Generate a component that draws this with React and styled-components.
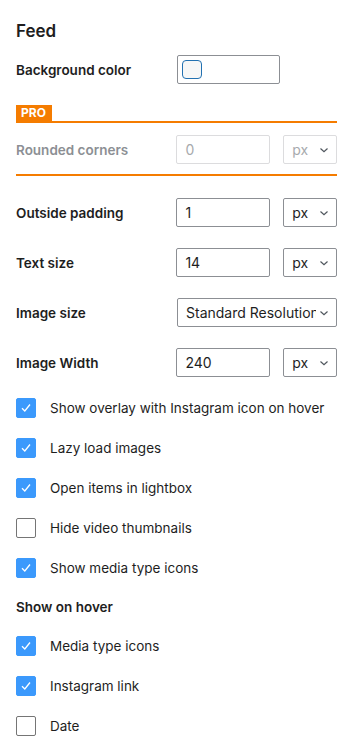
import React from 'react';
import styled, { createGlobalStyle } from 'styled-components';

const GlobalStyle = createGlobalStyle`
  body {
    margin: 0;
    background: #ffffff;
    font-family: Inter, "Noto Sans", sans-serif;
    color: #1e1e1e;
  }
`;

const Panel = styled.div`
  width: 349px;
  padding: 20px 12px 0 16px;
  box-sizing: border-box;
`;

const Heading = styled.h2`
  margin: 0 0 13px;
  font-size: 17px;
  font-weight: 600;
  line-height: 22px;
`;

const Row = styled.div`
  display: flex;
  align-items: center;
  height: 29px;
  margin-bottom: ${(p) => p.$mb ?? 21}px;
`;

const Label = styled.div`
  width: 161px;
  font-size: 13.5px;
  font-weight: 600;
  color: ${(p) => (p.$muted ? '#8c8f94' : '#1e1e1e')};
`;

const Field = styled.div`
  box-sizing: border-box;
  height: 29px;
  width: ${(p) => p.$w}px;
  border: 1px solid ${(p) => (p.$muted ? '#dcdcde' : '#8c8f94')};
  border-radius: 2px;
  display: flex;
  align-items: center;
  padding: 0 8px;
  font-size: 14px;
  color: ${(p) => (p.$muted ? '#a7aaad' : '#1e1e1e')};
  background: #fff;
  white-space: nowrap;
  overflow: hidden;
`;

const Select = styled(Field)`
  margin-left: ${(p) => p.$ml ?? 13}px;
  justify-content: space-between;
  padding: 0 6px 0 8px;
`;

const SelectText = styled.span`
  overflow: hidden;
  flex: 1;
`;

const Chevron = styled.svg`
  flex: none;
  margin-left: 2px;
`;

const ColorBox = styled(Field)`
  width: 103px;
  padding: 0 4px;
`;

const Swatch = styled.div`
  width: 20px;
  height: 19px;
  box-sizing: border-box;
  border: 1px solid #2271b1;
  border-radius: 4px;
  background: #f6f7f7;
`;

const ProSection = styled.div`
  margin-bottom: 22px;
`;

const ProHead = styled.div`
  display: flex;
  border-bottom: 2px solid #f57c00;
  margin-bottom: 12px;
`;

const ProBadge = styled.span`
  background: #f57c00;
  color: #fff;
  font-size: 12px;
  font-weight: 700;
  line-height: 16px;
  padding: 0 6px 0 5px;
`;

const ProFoot = styled.div`
  border-top: 2px solid #f57c00;
  margin-top: 10px;
`;

const Checks = styled.div`
  display: flex;
  flex-direction: column;
  gap: 20px;
  margin-top: ${(p) => p.$mt}px;
`;

const CheckRow = styled.label`
  display: flex;
  align-items: center;
  gap: 14px;
  font-size: 13.5px;
  line-height: 20px;
  color: #1e1e1e;
`;

const Box = styled.span`
  flex: none;
  width: 20px;
  height: 20px;
  box-sizing: border-box;
  border-radius: 2px;
  display: flex;
  align-items: center;
  justify-content: center;
  background: ${(p) => (p.$on ? '#3b99fc' : '#fff')};
  border: 1px solid ${(p) => (p.$on ? '#3b99fc' : '#757575')};
`;

const SubHeading = styled.div`
  font-size: 13.5px;
  font-weight: 600;
  line-height: 20px;
  margin-top: 19px;
`;

function Arrow() {
  return (
    <Chevron width="12" height="12" viewBox="0 0 12 12" fill="none">
      <path d="M2.5 4.5 L6 7.8 L9.5 4.5" stroke="#50575e" strokeWidth="1.2" />
    </Chevron>
  );
}

function UnitSelect({ muted }) {
  return (
    <Select $w={54} $muted={muted}>
      <SelectText>px</SelectText>
      <Arrow />
    </Select>
  );
}

function Check({ on, children }) {
  return (
    <CheckRow>
      <Box $on={on}>
        {on && (
          <svg width="14" height="14" viewBox="0 0 14 14" fill="none">
            <path d="M3 7.2 L5.8 10 L11 3.5" stroke="#fff" strokeWidth="1.3" />
          </svg>
        )}
      </Box>
      {children}
    </CheckRow>
  );
}

const mainChecks = [
  { text: 'Show overlay with Instagram icon on hover', on: true },
  { text: 'Lazy load images', on: true },
  { text: 'Open items in lightbox', on: true },
  { text: 'Hide video thumbnails', on: false },
  { text: 'Show media type icons', on: true },
];

const hoverChecks = [
  { text: 'Media type icons', on: true },
  { text: 'Instagram link', on: true },
  { text: 'Date', on: false },
];

export default function App() {
  return (
    <>
      <GlobalStyle />
      <Panel>
        <Heading>Feed</Heading>
        <Row $mb={21}>
          <Label>Background color</Label>
          <ColorBox>
            <Swatch />
          </ColorBox>
        </Row>

        <ProSection>
          <ProHead>
            <ProBadge>PRO</ProBadge>
          </ProHead>
          <Row $mb={0}>
            <Label $muted>Rounded corners</Label>
            <Field $w={94} $muted>0</Field>
            <UnitSelect muted />
          </Row>
          <ProFoot />
        </ProSection>

        <Row>
          <Label>Outside padding</Label>
          <Field $w={94}>1</Field>
          <UnitSelect />
        </Row>
        <Row>
          <Label>Text size</Label>
          <Field $w={94}>14</Field>
          <UnitSelect />
        </Row>
        <Row>
          <Label>Image size</Label>
          <Select $w={160} $ml={0}>
            <SelectText>Standard Resolution</SelectText>
            <Arrow />
          </Select>
        </Row>
        <Row $mb={0}>
          <Label>Image Width</Label>
          <Field $w={94}>240</Field>
          <UnitSelect />
        </Row>

        <Checks $mt={21}>
          {mainChecks.map((c) => (
            <Check key={c.text} on={c.on}>{c.text}</Check>
          ))}
        </Checks>

        <SubHeading>Show on hover</SubHeading>
        <Checks $mt={19}>
          {hoverChecks.map((c) => (
            <Check key={c.text} on={c.on}>{c.text}</Check>
          ))}
        </Checks>
      </Panel>
    </>
  );
}
